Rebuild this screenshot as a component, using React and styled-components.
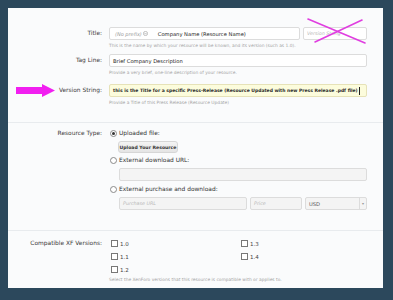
import React from "react";
import styled, { createGlobalStyle } from "styled-components";

const Global = createGlobalStyle`
  html, body { margin: 0; padding: 0; background: #2c485c; }
  body { width: 393px; height: 300px; overflow: hidden; font-family: "DejaVu Sans", Verdana, sans-serif; }
`;

const Page = styled.div`
  width: 393px;
  height: 300px;
  padding: 8px 10px 12px 8px;
  box-sizing: border-box;
`;

const Panel = styled.div`
  position: relative;
  width: 375px;
  height: 280px;
  box-sizing: border-box;
  background: #fafbfc;
  padding: 19px 16px 0 0;
`;

const Row = styled.div`
  display: grid;
  grid-template-columns: 94px 1fr;
  column-gap: 7px;
  margin-top: ${(p) => p.$mt || 0}px;
`;

const Label = styled.div`
  text-align: right;
  font-size: 5.9px;
  color: #3a3a3a;
  line-height: ${(p) => p.$lh || 13}px;
  white-space: nowrap;
`;

const Controls = styled.div`
  display: flex;
  flex-direction: column;
  min-width: 0;
`;

const InputLine = styled.div`
  display: flex;
  gap: 3px;
  margin-left: ${(p) => p.$indent || 0}px;
  margin-top: ${(p) => p.$mt || 0}px;
`;

const Box = styled.div`
  box-sizing: border-box;
  height: 13px;
  border: 1px solid ${(p) => (p.$yellow ? "#e6e2b8" : "#dcdcdc")};
  border-radius: 2px;
  background: ${(p) => (p.$yellow ? "#fcfcdc" : p.$disabled ? "#f4f4f4" : "#ffffff")};
  flex: ${(p) => (p.$w ? `0 0 ${p.$w}px` : "1 1 auto")};
  display: flex;
  align-items: center;
  padding: 0 3px;
  font-size: 5.2px;
  color: #222;
  white-space: nowrap;
  overflow: hidden;
`;

const Placeholder = styled.span`
  color: #b8b8b8;
  font-style: italic;
  font-size: 4.8px;
`;

const Prefix = styled.span`
  color: #9a9a9a;
  font-style: italic;
  font-size: 5px;
  display: inline-flex;
  align-items: center;
  gap: 1px;
  margin: 0 10px 0 5px;
`;

const BoldText = styled.span`
  font-weight: bold;
  font-size: 4.5px;
  color: #2a2a2a;
`;

const Caret = styled.span`
  display: inline-block;
  width: 1px;
  height: 8px;
  background: #222;
  margin-left: 1px;
`;

const Hint = styled.div`
  font-size: 4.4px;
  color: #a4a4a4;
  line-height: 8px;
  margin-top: 2px;
  white-space: nowrap;
`;

const Rule = styled.div`
  height: 1px;
  background: #e8ebee;
  margin: ${(p) => p.$mt}px 0 0 0;
  width: 375px;
`;

const Option = styled.div`
  display: flex;
  align-items: center;
  height: 10px;
  gap: 2px;
  margin-top: ${(p) => p.$mt || 0}px;
  font-size: 5.9px;
  color: #333;
`;

const Radio = styled.span`
  box-sizing: border-box;
  width: 7px;
  height: 7px;
  border-radius: 50%;
  border: 1px solid #8a8a8a;
  background: #fff;
  display: inline-flex;
  align-items: center;
  justify-content: center;
  margin-left: 1px;
  &::after {
    content: "";
    width: 3px;
    height: 3px;
    border-radius: 50%;
    background: ${(p) => (p.$checked ? "#333" : "transparent")};
  }
`;

const Button = styled.div`
  box-sizing: border-box;
  margin: 3px 0 0 9px;
  width: 60px;
  height: 12px;
  border: 1px solid #d6d6d6;
  border-radius: 3px;
  background: linear-gradient(#f4f4f4, #e4e4e4);
  font-size: 4.6px;
  font-weight: bold;
  color: #333;
  display: flex;
  align-items: center;
  justify-content: center;
  white-space: nowrap;
`;

const Select = styled(Box)`
  padding: 0 0 0 3px;
  justify-content: space-between;
  color: #555;
`;

const SelectArrow = styled.span`
  width: 6px;
  height: 11px;
  border-left: 1px solid #dcdcdc;
  display: flex;
  align-items: center;
  justify-content: center;
  font-size: 4px;
  color: #999;
`;

const CheckGrid = styled.div`
  display: grid;
  grid-template-columns: 130px 1fr;
  grid-template-rows: repeat(3, 13px);
  grid-auto-flow: column;
  margin-left: 2px;
`;

const Check = styled.div`
  display: flex;
  align-items: center;
  gap: 2px;
  font-size: 5.5px;
  color: #444;
`;

const Box7 = styled.span`
  box-sizing: border-box;
  width: 7px;
  height: 7px;
  border: 1px solid #777;
  background: #fff;
`;

const Overlay = styled.svg`
  position: absolute;
  left: 0;
  top: 0;
  pointer-events: none;
`;

const versions = ["1.0", "1.1", "1.2", "1.3", "1.4"];

export default function App() {
  return (
    <Page>
      <Global />
      <Panel>
        <Row>
          <Label>Title:</Label>
          <Controls>
            <InputLine>
              <Box $w={191} style={{ paddingLeft: 0 }}>
                <Prefix>
                  (No prefix)
                  <svg width="5" height="5" viewBox="0 0 10 10">
                    <circle cx="5" cy="5" r="4.2" fill="none" stroke="#999" strokeWidth="1.2" />
                    <path d="M3 4 L5 6.3 L7 4" fill="none" stroke="#999" strokeWidth="1.2" />
                  </svg>
                </Prefix>
                Company Name (Resource Name)
              </Box>
              <Box $w={64}>
                <Placeholder>Version String</Placeholder>
              </Box>
            </InputLine>
            <Hint>This is the name by which your resource will be known, and its version (such as 1.0).</Hint>
          </Controls>
        </Row>
        <Row $mt={4}>
          <Label>Tag Line:</Label>
          <Controls>
            <InputLine>
              <Box>Brief Company Description</Box>
            </InputLine>
            <Hint>Provide a very brief, one-line description of your resource.</Hint>
          </Controls>
        </Row>
        <Row $mt={7}>
          <Label>Version String:</Label>
          <Controls>
            <InputLine>
              <Box $yellow>
                <BoldText>
                  this is the Title for a specific Press-Release (Resource Updated with new Press Release .pdf file)
                </BoldText>
                <Caret />
              </Box>
            </InputLine>
            <Hint>Provide a Title of this Press Release (Resource Update)</Hint>
          </Controls>
        </Row>
        <Rule $mt={15} />
        <Row $mt={5}>
          <Label $lh={10}>Resource Type:</Label>
          <Controls>
            <Option>
              <Radio $checked />
              Uploaded file:
            </Option>
            <Button>Upload Your Resource</Button>
            <Option $mt={2}>
              <Radio />
              External download URL:
            </Option>
            <InputLine $indent={10} $mt={3}>
              <Box $disabled />
            </InputLine>
            <Option $mt={3}>
              <Radio />
              External purchase and download:
            </Option>
            <InputLine $indent={10} $mt={3}>
              <Box $disabled $w={128}>
                <Placeholder>Purchase URL</Placeholder>
              </Box>
              <Box $disabled $w={52}>
                <Placeholder>Price</Placeholder>
              </Box>
              <Select $disabled $w={62}>
                USD
                <SelectArrow>▾</SelectArrow>
              </Select>
            </InputLine>
          </Controls>
        </Row>
        <Rule $mt={20} />
        <Row $mt={6}>
          <Label>Compatible XF Versions:</Label>
          <Controls>
            <CheckGrid>
              {versions.map((v) => (
                <Check key={v}>
                  <Box7 />
                  {v}
                </Check>
              ))}
            </CheckGrid>
            <Hint style={{ marginTop: 0 }}>
              Select the XenForo versions that this resource is compatible with or applies to.
            </Hint>
          </Controls>
        </Row>
        <Overlay width="375" height="280" viewBox="0 0 375 280">
          <g stroke="#e03ee0" strokeWidth="1.6" strokeLinecap="round">
            <line x1="300" y1="11" x2="357" y2="35" />
            <line x1="354" y1="12" x2="307" y2="34" />
          </g>
          <path d="M8 79 L34 79 L34 76 L47 82.5 L34 89 L34 86 L8 86 Z" fill="#f11ff0" />
        </Overlay>
      </Panel>
    </Page>
  );
}
